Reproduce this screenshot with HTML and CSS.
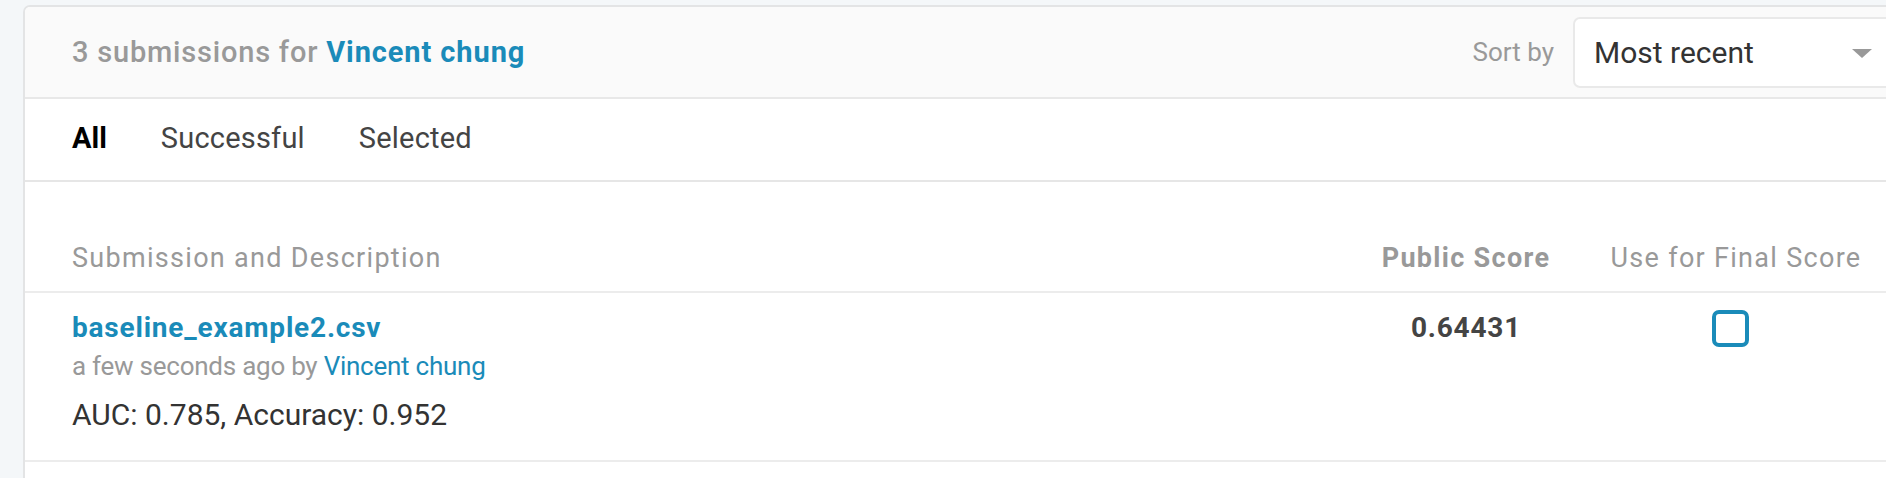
FILE: index.html
```html
<!DOCTYPE html>
<html>
<head>
<meta charset="utf-8">
<link rel="stylesheet" href="styles.css">
</head>
<body>
<div class="card">
  <div class="card-header">
    <div class="title"><span class="count">3 submissions for</span><a class="user">Vincent chung</a></div>
    <div class="sort">
      <span class="sort-label">Sort by</span>
      <div class="select"><span>Most recent</span><span class="caret"></span></div>
    </div>
  </div>
  <div class="tabs">
    <span class="tab active">All</span>
    <span class="tab">Successful</span>
    <span class="tab">Selected</span>
  </div>
  <div class="table">
    <div class="row head">
      <div class="cell desc">Submission and Description</div>
      <div class="cell score bold">Public Score</div>
      <div class="cell final">Use for Final Score</div>
    </div>
    <div class="row item">
      <div class="cell desc">
        <a class="file">baseline_example2.csv</a>
        <div class="meta">a few seconds ago by <a class="user-link">Vincent chung</a></div>
        <div class="description">AUC: 0.785, Accuracy: 0.952</div>
      </div>
      <div class="cell score value">0.64431</div>
      <div class="cell final"><span class="checkbox"></span></div>
    </div>
  </div>
</div>
</body>
</html>
```
FILE: styles.css
```css
html, body {
  margin: 0;
  padding: 0;
}
body {
  background: #f4f7f9;
  font-family: Roboto, "Liberation Sans", Arial, sans-serif;
  height: 478px;
  overflow: hidden;
}
.card {
  margin: 5px 0 0 23px;
  width: 1920px;
  height: 473px;
  box-sizing: border-box;
  border: 2px solid #e3e4e5;
  border-bottom: none;
  border-radius: 7px 7px 0 0;
  background: #fff;
  overflow: hidden;
}
.card-header {
  display: flex;
  justify-content: space-between;
  align-items: center;
  height: 90px;
  padding: 0 36px 0 47px;
  background: #fafafa;
  border-bottom: 2px solid #e8e8e8;
}
.title {
  font-size: 29px;
  line-height: 40px;
  font-weight: 500;
  display: flex;
  gap: 8px;
}
.count {
  color: #999;
  letter-spacing: 0.8px;
}
.user {
  color: #1a8bb9;
  font-weight: 700;
  letter-spacing: 0.9px;
}
.sort {
  display: flex;
  align-items: center;
  gap: 19px;
}
.sort-label {
  color: #999;
  font-size: 26px;
}
.select {
  width: 332px;
  height: 71px;
  box-sizing: border-box;
  border: 2px solid #e9e9e9;
  border-radius: 7px;
  background: #fff;
  display: flex;
  align-items: center;
  justify-content: space-between;
  padding: 0 31px 0 19px;
  font-size: 30px;
  color: #333;
}
.caret {
  width: 0;
  height: 0;
  border-left: 10px solid transparent;
  border-right: 10px solid transparent;
  border-top: 9px solid #999;
  margin-top: 2px;
}
.tabs {
  display: flex;
  gap: 54px;
  padding: 19px 47px 22px;
  border-bottom: 2px solid #e6e6e6;
  font-size: 29px;
  line-height: 40px;
  color: #444;
}
.tab {
  letter-spacing: 0.2px;
}
.tab.active {
  color: #000;
  font-weight: 700;
  letter-spacing: 0;
}
.table {
  padding: 0 55px 0 47px;
}
.row {
  display: grid;
  grid-template-columns: 1fr 240px 300px;
  border-bottom: 2px solid #ececec;
  margin-right: -55px;
  padding-right: 55px;
  margin-left: -47px;
  padding-left: 47px;
}
.row.head {
  padding-top: 56px;
  padding-bottom: 13px;
  font-size: 27px;
  line-height: 40px;
  color: #999;
  letter-spacing: 1.3px;
}
.row.head .score {
  font-weight: 700;
}
.cell.score, .cell.final {
  text-align: center;
}
.row.item {
  padding-top: 17px;
  padding-bottom: 25px;
}
.file {
  display: block;
  color: #1a8bb9;
  font-weight: 700;
  font-size: 28px;
  line-height: 36px;
  letter-spacing: 0.8px;
}
.meta {
  margin-top: 2px;
  color: #999;
  font-size: 26px;
  line-height: 36px;
  letter-spacing: -0.25px;
}
.user-link {
  color: #1a8bb9;
}
.description {
  margin-top: 11px;
  color: #333;
  font-size: 30px;
  line-height: 40px;
}
.value {
  font-weight: 700;
  font-size: 28px;
  line-height: 36px;
  color: #444;
  letter-spacing: 0.8px;
}
.final {
  display: flex;
  justify-content: center;
}
.row.head .final {
  display: block;
}
.checkbox {
  display: block;
  width: 37px;
  height: 37px;
  box-sizing: border-box;
  border: 4px solid #1a8bb9;
  border-radius: 7px;
  margin-left: -12px;
}
```
